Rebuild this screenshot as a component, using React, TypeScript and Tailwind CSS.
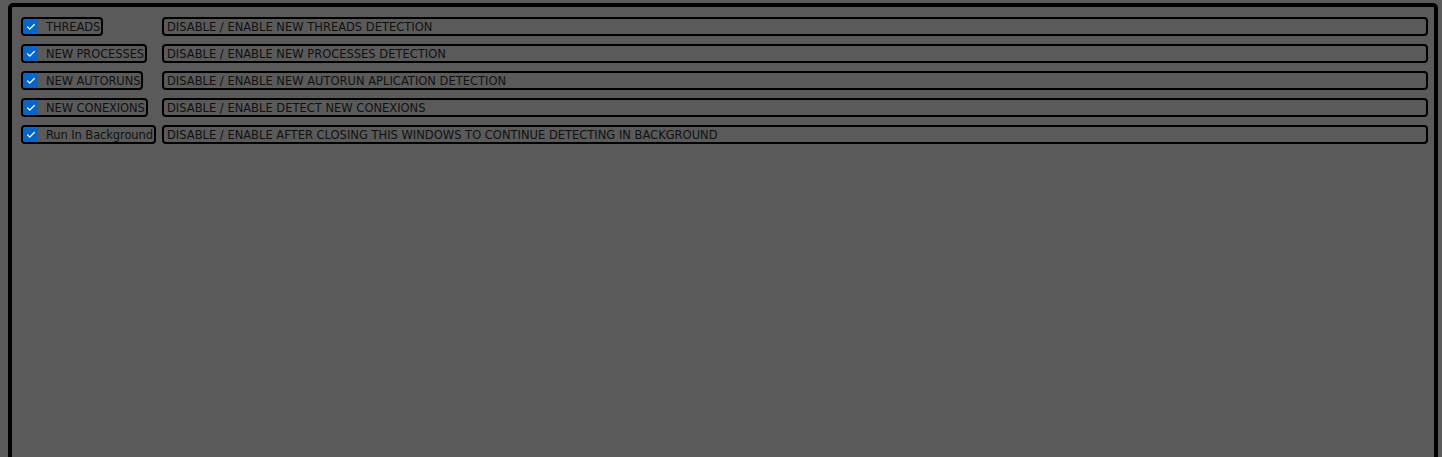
import { Check } from "lucide-react";

const options = [
  { label: "THREADS", desc: "DISABLE / ENABLE NEW THREADS DETECTION" },
  { label: "NEW PROCESSES", desc: "DISABLE / ENABLE NEW PROCESSES DETECTION" },
  { label: "NEW AUTORUNS", desc: "DISABLE / ENABLE NEW AUTORUN APLICATION DETECTION" },
  { label: "NEW CONEXIONS", desc: "DISABLE / ENABLE DETECT NEW CONEXIONS" },
  { label: "Run In Background", desc: "DISABLE / ENABLE AFTER CLOSING THIS WINDOWS TO CONTINUE DETECTING IN BACKGROUND" },
];

export default function App() {
  return (
    <main
      className="h-[457px] overflow-hidden bg-[#5a5a5a] pl-2 pr-1 pt-[3px] text-[11.5px] text-[#111]"
      style={{ fontFamily: "'DejaVu Sans', Verdana, sans-serif" }}
    >
      <div className="h-[470px] rounded-[5px] border-4 border-black pl-[9px] pr-[6px] pt-[10px]">
        <div className="flex flex-col gap-2">
          {options.map(o => (
            <div key={o.label} className="flex h-[19px] items-stretch">
              <div className="w-[141px] shrink-0">
                <label className="inline-flex h-full items-center gap-2 rounded-[4px] border-2 border-black pr-[1px]">
                  <span className="flex h-[15px] w-[15px] items-center justify-center rounded-[2px] bg-[#0565c8]">
                    <Check className="h-[10px] w-[10px] text-white" strokeWidth={3} />
                  </span>
                  <span className="pt-[3px] leading-none tracking-[-0.1px]">{o.label}</span>
                </label>
              </div>
              <div className="flex flex-1 items-center rounded-[4px] border-2 border-black pl-[3px] pt-[3px] leading-none">
                {o.desc}
              </div>
            </div>
          ))}
        </div>
      </div>
    </main>
  );
}
